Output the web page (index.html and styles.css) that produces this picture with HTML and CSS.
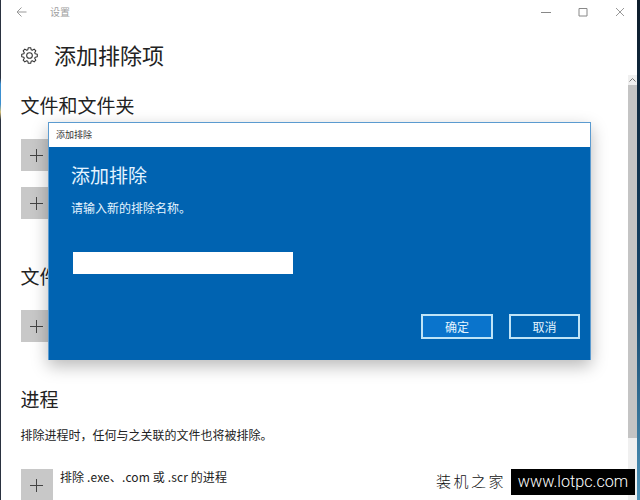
FILE: index.html
```html
<!DOCTYPE html>
<html lang="zh">
<head>
<meta charset="utf-8">
<title>设置</title>
<link rel="stylesheet" href="styles.css">
</head>
<body>
<div class="desktop">
  <div class="edge-left"></div>
  <div class="window">
    <header class="titlebar">
      <svg class="back" width="12" height="12" viewBox="0 0 12 12"><path d="M10.500 6H1M5.500 1.500 1 6l4.500 4.500" fill="none" stroke="#999" stroke-width="1"/></svg>
      <span class="app-name">设置</span>
      <div class="controls">
        <svg width="10" height="10" viewBox="0 0 10 10"><path d="M0 5.500h10" stroke="#888" fill="none"/></svg>
        <svg width="10" height="10" viewBox="0 0 10 10"><path d="M1 1.500h8v7.500h-8z" stroke="#888" fill="none"/></svg>
        <svg width="10" height="10" viewBox="0 0 10 10"><path d="M1 1l8 8M9 1l-8 8" stroke="#999" fill="none"/></svg>
      </div>
    </header>
    <div class="content-row">
      <main class="content">
        <div class="page-head">
          <svg class="gear" width="17" height="17" viewBox="0 0 24 24"><path d="M9.600 4 10.300 1h3.400l.7 3 1.560.65 2.620-1.630 2.400 2.400-1.630 2.620L20 9.600l3 .7v3.400l-3 .7-.65 1.560 1.630 2.620-2.400 2.400-2.620-1.630L14.400 20l-.7 3h-3.400l-.7-3-1.560-.65-2.620 1.630-2.400-2.400 1.630-2.620L4 14.400l-3-.7v-3.400l3-.7.65-1.560-1.630-2.620 2.400-2.400 2.620 1.630z" fill="none" stroke="#333" stroke-width="1.500" stroke-linejoin="round"/><circle cx="12" cy="12" r="4" fill="none" stroke="#333" stroke-width="1.500"/></svg>
          <h1>添加排除项</h1>
        </div>
        <section class="sec-files">
          <h2>文件和文件夹</h2>
          <div class="add-btn"><i></i></div>
          <div class="add-btn second"><i></i></div>
        </section>
        <section class="sec-types">
          <h2>文件</h2>
          <div class="add-btn"><i></i></div>
        </section>
        <section class="sec-proc">
          <h2>进程</h2>
          <p class="desc">排除进程时，任何与之关联的文件也将被排除。</p>
          <div class="proc-row">
            <div class="add-btn"><i></i></div>
            <span class="proc-label">排除 .exe、.com 或 .scr 的进程</span>
          </div>
        </section>
      </main>
      <aside class="scrollbar">
        <svg class="up" width="7" height="4" viewBox="0 0 7 4"><path d="M.5 3.500l3-3 3 3" fill="none" stroke="#777"/></svg>
        <div class="thumb"></div>
      </aside>
    </div>
  </div>
  <div class="edge-right"></div>

  <div class="dialog">
    <div class="dialog-title">添加排除</div>
    <div class="dialog-body">
      <h3>添加排除</h3>
      <p class="prompt">请输入新的排除名称。</p>
      <div class="input"></div>
      <div class="actions">
        <button class="btn primary">确定</button>
        <button class="btn secondary">取消</button>
      </div>
    </div>
  </div>

  <div class="watermark">
    <span class="wm-cn">装机之家</span>
    <span class="wm-url">www.lotpc.com</span>
  </div>
</div>
</body>
</html>
```
FILE: styles.css
```css
* { box-sizing: border-box; margin: 0; padding: 0; }
html, body { width: 640px; height: 500px; overflow: hidden; background: #fff; }
body { font-family: "Noto Sans CJK SC", "Liberation Sans", sans-serif; color: #1a1a1a; }
.desktop { position: relative; display: flex; width: 640px; height: 500px; overflow: hidden; }
.edge-left { width: 1px; flex: none; background: linear-gradient(#2a3240 0, #2a3240 78px, #3b8fd0 84px, #3b8fd0 104px, #d8c27a 112px, #2a3240 120px, #2a3240 100%); }
.edge-right { width: 3px; flex: none; background: linear-gradient(#0d1c2a, #14466c 60%, #4f93b8); }
.window { flex: 1; display: flex; flex-direction: column; min-width: 0; background: #fff; }
.titlebar { display: flex; align-items: center; height: 23px; padding-left: 15px; flex: none; }
.back { flex: none; }
.app-name { margin-left: 22px; font-size: 10px; color: #a0a0a0; }
.controls { margin-left: auto; display: flex; gap: 27px; padding-right: 12px; }
.content-row { flex: 1; display: flex; min-height: 0; }
.content { flex: 1; padding-left: 20px; min-width: 0; }
.page-head { display: flex; align-items: center; height: 40px; margin-top: 11px; }
.gear { flex: none; margin-top: 2px; }
h1 { margin-left: 16px; font-size: 22px; font-weight: 400; line-height: 40px; color: #222; }
h2 { margin-left: -.5px; font-size: 19px; font-weight: 400; line-height: 28px; color: #222; }
.sec-files { margin-top: 17px; }
.add-btn { width: 32px; height: 32px; background: #c8c8c8; display: flex; align-items: center; justify-content: center; flex: none; padding-right: 1px; }
.add-btn i { display: block; width: 13px; height: 13px; background: linear-gradient(#444, #444) center / 13px 1px no-repeat, linear-gradient(#444, #444) center / 1px 13px no-repeat; }
.sec-files .add-btn { margin-top: 20px; }
.sec-files .add-btn.second { margin-top: 16px; }
.sec-types { margin-top: 43px; }
.sec-types .add-btn { margin-top: 20px; }
.sec-proc { margin-top: 43px; }
.desc { margin: 13px 0 0 -.5px; font-size: 12px; line-height: 18px; color: #222; }
.proc-row { display: flex; margin-top: 25px; gap: 7px; }
.proc-label { font-size: 12px; line-height: 16px; letter-spacing: .12px; color: #222; }
.scrollbar { width: 9px; flex: none; margin-top: 52px; background: #f0f0f0; display: flex; flex-direction: column; align-items: center; }
.up { margin-top: 3px; flex: none; }
.thumb { width: 9px; height: 353px; margin-top: 3px; background: #c4c4c4; }
.dialog { position: absolute; left: 48px; top: 122px; width: 543px; height: 238px; display: flex; flex-direction: column; border: 1px solid #5b9bd0; border-bottom: 0; box-shadow: 0 6px 16px rgba(0,0,0,.28); }
.dialog-title { height: 24px; flex: none; background: #fff; font-size: 9px; line-height: 24px; padding-left: 7px; color: #333; }
.dialog-body { flex: 1; background: #0063b1; padding: 14px 22px 0; color: #e4f4ff; display: flex; flex-direction: column; }
h3 { font-size: 19px; font-weight: 400; line-height: 28px; }
.prompt { margin-top: 10px; font-size: 12px; line-height: 18px; }
.input { width: 220px; height: 22px; margin: 35px 0 0 2px; background: #fff; }
.actions { display: flex; justify-content: flex-end; gap: 16px; margin-top: 40px; margin-right: -12px; }
.btn { width: 72px; height: 25px; background: #0063b1; border: 2px solid #bfe4f7; color: #e4f4ff; font: 12px/21px "Noto Sans CJK SC", sans-serif; }
.btn.primary { background: #0a74cc; }
.btn.secondary { width: 71px; }
.watermark { position: absolute; left: 436px; top: 469px; display: flex; gap: 6px; }
.wm-cn { width: 69px; font: 300 15px/24px "Noto Sans CJK SC", serif; letter-spacing: 2.500px; color: #111; white-space: nowrap; }
.wm-url { width: 124px; height: 26px; background: #000; color: #fff; font: 300 16.200px/26px Roboto, "Liberation Sans", sans-serif; text-align: center; }
```
